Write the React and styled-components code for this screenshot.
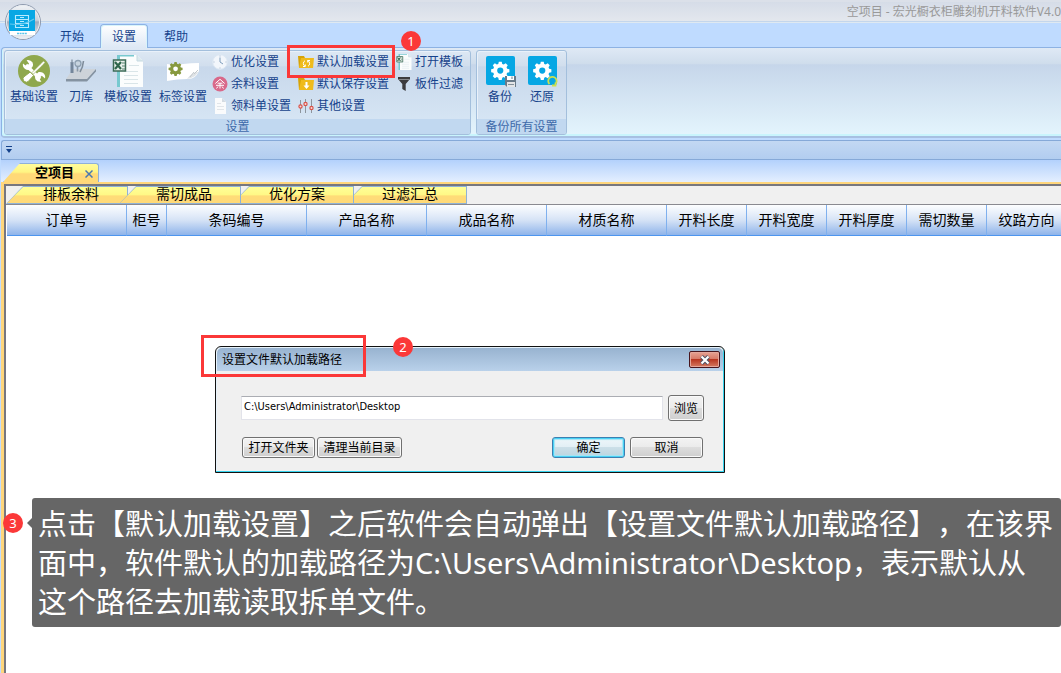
"use strict";

import React, { useState } from "react";
import styled, { createGlobalStyle, css } from "styled-components";

/*************************************************************************/

const GlobalStyle = createGlobalStyle`
  * { box-sizing: border-box; }
  body {
    margin: 0;
    overflow: hidden;
    background: #fff;
    font-family: "Noto Sans", "Noto Sans CJK SC", sans-serif;
    font-size: 12px;
    line-height: 16px;
  }
  button, input {
    font: inherit;
    color: inherit;
  }
`;

let Page = styled.div`
  position: relative;
  display: flex;
  flex-direction: column;
  min-height: 100vh;
  overflow: hidden;
  background: #bfdbff;
`;

let TitleBar = styled.header`
  display: flex;
  justify-content: flex-end;
  height: 23px;
  padding: 4px 0 0 60px;
  border-bottom: 1px solid #dfe9f1;
  box-shadow: inset 0 -1px #c3d6ec, inset 0 2px #dbe0e9;
  background: linear-gradient(#d4dbe7, #e4e8ee);
  color: #999;
  white-space: nowrap;
`;

let AppButton = styled.button`
  position: absolute;
  left: 4px;
  top: 3px;
  z-index: 2;
  width: 38px;
  height: 38px;
  padding: 0;
  border: 0;
  background: none;
`;

let RibbonTabs = styled.nav`
  display: flex;
  gap: 4px;
  height: 25px;
  margin-bottom: -1px;
  padding: 1px 0 0 48px;
`;

let RibbonTab = styled.button`
  position: relative;
  width: 48px;
  padding: 0;
  border: 1px solid transparent;
  border-bottom: 0;
  border-radius: 4px 4px 0 0;
  background: none;
  color: #15428b;
  ${p => p.$active && css`
    border-color: #8db2e3;
    background: linear-gradient(#fff, #dde8f5);
    box-shadow: inset 1px 1px #d8f4fb, inset -1px 0 #d8f4fb;
  `}
`;

let Ribbon = styled.section`
  display: flex;
  gap: 5px;
  height: 91px;
  margin-left: 1px;
  padding: 2px 0 1px 2px;
  border: 1px solid #8db2e3;
  border-right: 0;
  border-bottom: 2px solid #a7c0e2;
  border-radius: 4px 0 0 4px;
  box-shadow: inset 1px -2px #c9f5fd;
  background: linear-gradient(#dfe9f5 0, #cfddec 18%, #c6d6ea 19%, #e4f5fd 100%);
`;

let Group = styled.div`
  display: flex;
  flex-direction: column;
  justify-content: space-between;
  border: 1px solid #a3bfdc;
  border-radius: 3px;
  overflow: hidden;
  box-shadow: inset 1px 1px #e9f1fa;
  background: linear-gradient(#dde8f4 0, #d1deed 18%, #c8d8eb 19%, #d9e8f6 100%);
`;

let GroupBody = styled.div`
  display: flex;
  align-items: flex-start;
  gap: ${p => p.$gap};
  padding: ${p => p.$padding};
`;

let GroupLabel = styled.div`
  height: 15px;
  background: #c1d8f0;
  color: #3e6aaa;
  text-align: center;
  line-height: 15px;
`;

let BigButton = styled.button`
  display: flex;
  flex-direction: column;
  align-items: center;
  gap: 2px;
  padding: 4px 2px 0;
  border: 0;
  background: none;
  color: #15428b;
  white-space: nowrap;
`;

let SmallColumns = styled.div`
  display: flex;
  gap: 7px;
`;

let SmallColumn = styled.div`
  display: flex;
  flex-direction: column;
`;

let SmallButton = styled.button`
  display: flex;
  align-items: center;
  gap: 3px;
  height: 22px;
  padding: 0;
  border: 0;
  background: none;
  color: #15428b;
  white-space: nowrap;
`;

let QuickBar = styled.div`
  display: flex;
  align-items: center;
  height: 20px;
  margin: 2px 0 0 1px;
  padding-left: 4px;
  border: 1px solid #86a9d8;
  border-right: 0;
  border-radius: 3px 0 0 0;
  background: linear-gradient(#c3d8f3, #b2cdf0);
`;

let IconButton = styled.button`
  display: flex;
  padding: 0;
  border: 0;
  background: none;
`;

let DocumentTabs = styled.div`
  display: flex;
  align-items: flex-end;
  height: 22px;
  margin-left: 1px;
  padding-left: 2px;
  background: linear-gradient(#b3d1fc, #e4efff);
`;

let slant = size => css`
  clip-path: polygon(${size} 0, 100% 0, 100% 100%, 0 100%);
`;

let DocumentTab = styled.div`
  display: flex;
  align-items: center;
  gap: 11px;
  height: 19px;
  padding: 0 5px 2px 31px;
  border: 1px solid #8fb0d8;
  border-bottom: 0;
  border-radius: 0 3px 0 0;
  background: linear-gradient(#fffc9c 0, #fff582 45%, #ffd978 55%, #ffd978 100%);
  font-size: 13px;
  font-weight: bold;
  ${slant("17px")}
`;

let Workspace = styled.main`
  position: relative;
  display: flex;
  flex: 1;
  flex-direction: column;
  min-height: 400px;
  margin-left: 1px;
  border-top: 2px solid #ffd67c;
  border-left: 3px solid #ffd67c;
`;

let Frame = styled.div`
  flex: 1;
  border-top: 2px solid #77777f;
  border-left: 2px solid #77777f;
  overflow: hidden;
  background: #fff;
`;

let SheetTabs = styled.div`
  display: flex;
  height: 19px;
  border-bottom: 1px solid #8a8a90;
  background: #f0f0f0;
`;

let SheetTab = styled.button`
  position: relative;
  z-index: ${p => p.$level};
  width: 122px;
  margin-right: -9px;
  padding: 0 0 0 9px;
  border: 0;
  background: #8fb2d6;
  font-size: 14px;
  ${slant("17px")}
`;

let SheetFace = styled.span`
  display: block;
  height: 16px;
  margin: 0 1px 0 -8px;
  padding-left: 8px;
  background: linear-gradient(#ffff98 0, #fff886 48%, #ffdc78 56%, #ffd978 100%);
  line-height: 14px;
  ${slant("16px")}
`;

let Table = styled.table`
  width: 1060px;
  margin-left: 1px;
  border-collapse: separate;
  border-spacing: 0;
  table-layout: fixed;
`;

let Th = styled.th`
  width: ${p => p.$width};
  height: 31px;
  padding: 0;
  border-right: 1px solid #7fb0ee;
  border-bottom: 1px solid #4d95ee;
  background: linear-gradient(#fdfeff, #d6e3f6 50%, #8fb4ea);
  font-size: 14px;
  font-weight: normal;
  white-space: nowrap;
`;

/*************************************************************************/

let Dialog = styled.section`
  position: absolute;
  left: 215px;
  top: 346px;
  z-index: 3;
  width: 510px;
  border: 1px solid #111;
  border-radius: 6px 6px 0 0;
  box-shadow: inset -1px -1px #35d3ee, inset 1px 1px #e6f2fb;
  background: #f0f0f0;
`;

let DialogTitle = styled.div`
  display: flex;
  align-items: center;
  justify-content: space-between;
  height: 23px;
  margin: 1px 1px 0;
  padding: 0 3px 0 5px;
  border-radius: 5px 5px 0 0;
  background: linear-gradient(#98b3d0, #b9d1ea);
`;

let CloseButton = styled.button`
  display: flex;
  align-items: center;
  justify-content: center;
  width: 31px;
  height: 17px;
  padding: 0;
  border: 1px solid #47151d;
  border-radius: 2px;
  box-shadow: inset 0 0 0 1px #e5a79c;
  background: linear-gradient(#e6a394 0, #d87b69 45%, #b83621 50%, #d57b62 100%);
`;

let DialogBody = styled.div`
  display: grid;
  gap: 16px;
  padding: 24px 20px 14px 25px;
`;

let Row = styled.div`
  display: flex;
  align-items: center;
  gap: ${p => p.$gap};
  padding: ${p => p.$padding || 0};
`;

let PathInput = styled.input`
  flex: 1;
  min-width: 0;
  height: 24px;
  padding: 0 2px 3px;
  border: 1px solid #e2e3ea;
  border-top-color: #abadb3;
  background: #fff;
  font-family: "DejaVu Sans Condensed", "Noto Sans", sans-serif;
  font-size: 11px;
`;

let DialogButton = styled.button`
  width: ${p => p.$width || "73px"};
  height: ${p => p.$height || "21px"};
  padding: 0;
  border: 1px solid #707070;
  border-radius: 3px;
  box-shadow: inset 0 0 0 1px #fafafa;
  background: linear-gradient(#f3f3f3 0, #ebebeb 49%, #dddddd 50%, #cfcfcf 100%);
  line-height: 17px;
  white-space: nowrap;
  ${p => p.$primary && css`
    border-color: #3c7fb1;
    box-shadow: inset 0 0 0 1px #48d2f5, inset 0 0 1px 2px #a5e4f6;
    background: linear-gradient(#eef6fa 0, #e2eff5 49%, #cbdfe8 50%, #bcd4df 100%);
  `}
`;

let Spacer = styled.div`
  flex: 1;
`;

/*************************************************************************/

let Highlight = styled.div`
  position: absolute;
  left: ${p => p.$left};
  top: ${p => p.$top};
  z-index: 4;
  width: ${p => p.$width};
  height: ${p => p.$height};
  border: 3px solid #fb3838;
  pointer-events: none;
`;

let Badge = styled.span`
  position: absolute;
  left: ${p => p.$left};
  top: ${p => p.$top};
  z-index: 5;
  width: 20px;
  height: 20px;
  border-radius: 50%;
  background: #fb3838;
  color: #fff;
  font-size: 13px;
  line-height: 20px;
  text-align: center;
`;

let Callout = styled.p`
  position: absolute;
  left: 32px;
  right: 0;
  top: 498px;
  z-index: 4;
  margin: 0;
  padding: 6px 8px 6px 6px;
  border-radius: 3px;
  background: #666;
  color: #fff;
  font-size: 29px;
  line-height: 39px;
  text-spacing-trim: space-all;

  &::before {
    content: "";
    position: absolute;
    left: -5px;
    top: 20px;
    border: 5px solid transparent;
    border-left: 0;
    border-right-color: #666;
  }
`;

/*************************************************************************/

let gearPath = "M14.3 6h3.4l.6 2.6 1.7.7 2.3-1.4 2.4 2.4-1.4 2.3.7 1.7 2.6.6v3.4l-2.6.6-.7 1.7 1.4 2.3-2.4 2.4-2.3-1.4-1.7.7-.6 2.6h-3.4l-.6-2.6-1.7-.7-2.3 1.4-2.4-2.4 1.4-2.3-.7-1.7-2.6-.6v-3.4l2.6-.6.7-1.7-1.4-2.3 2.4-2.4 2.3 1.4 1.7-.7zM16 12.8a3.6 3.6 0 1 0 0 7.200 3.600 3.600 0 0 0 0-7.200z";

let Logo = () => (
  <svg width="38" height="38" viewBox="0 0 38 38">
    <defs>
      <linearGradient id="orb" x2="0" y2="1">
        <stop offset="0" stopColor="#f4f6f9"/>
        <stop offset=".45" stopColor="#c9d0da"/>
        <stop offset=".5" stopColor="#9fabbd"/>
        <stop offset="1" stopColor="#f2f5f8"/>
      </linearGradient>
    </defs>
    <circle cx="19" cy="19" r="17.500" fill="url(#orb)" stroke="#8e9aae"/>
    <circle cx="19" cy="19" r="16.500" fill="none" stroke="#e8ecf1"/>
    <path d="M6 7h25v25H6z" fill="#fff"/>
    <path d="M5 7h26v21H5z" fill="#08a7e4"/>
    <g fill="none" stroke="#b8ebff" strokeWidth="1.1">
      <path d="M11.5 12.5h13v12h-13zM11.5 16.5h13M11.5 20.5h13M16 14.5h4M16 18.5h4M16 22.5h4"/>
      <path d="M6 21q13 2 24-5" stroke="#64c9ef"/>
    </g>
    <path d="M13 30.5h10" stroke="#59c3ea" strokeWidth="1.5" strokeDasharray="2 .6"/>
  </svg>
);

let ToolsIcon = () => (
  <svg width="32" height="32" viewBox="0 0 32 32">
    <circle cx="16" cy="16" r="16" fill="#8fa84d"/>
    <path d="M8 10l14 14" stroke="#fff" strokeWidth="3.4"/>
    <path d="M5 8.5l3.4 2.8 2.7-2.5L8.6 5.2q4-.8 6 2.4 1 2.2-.2 4.4l-3 2.8q-4.600.6-6.200-3Q4.500 10 5 8.500z" fill="#fff"/>
    <path d="M27 23.500l-3.200-2.800-2.700 2.500 2.300 3.500q-4 .8-6-2.400-1-2.200.2-4.400l3-2.800q4.600-.6 6.200 3 .7 1.800.2 3.400z" fill="#fff"/>
    <path d="M25.500 6l1.500 1.500-3 3.300L15.500 19 14 17.500l8.200-8.200z" fill="#fff" stroke="#8fa84d" strokeWidth=".6"/>
    <path d="M12.200 17l3.500 3.500-5.500 6q-1.700 1.500-3.600 0l-1-1q-1.400-1.800 0-3.400z" fill="#fff" stroke="#8fa84d"/>
  </svg>
);

let KnifeIcon = () => (
  <svg width="32" height="32" viewBox="0 0 32 32">
    <path d="M8 14h23L22 24H1z" fill="#cdd3d9"/>
    <path d="M1 24h21l9-10v2.500L22 26.500H1z" fill="#8593a1"/>
    <path d="M5.500 7h3v11h-3z" fill="#74869a"/>
    <path d="M7 4.500v3" stroke="#93a2b1" strokeWidth="1.600"/>
    <circle cx="13" cy="8.500" r="3" fill="#c7d4df" stroke="#8ea0b1" strokeWidth="1.300"/>
    <path d="M12.500 11.500v5" stroke="#8a99a8" strokeWidth="1.600"/>
    <path d="M18.500 6q-.5 6-3.500 11" stroke="#7f8d9b" strokeWidth="1.600" fill="none"/>
  </svg>
);

let ExcelIcon = ({size}) => (
  <svg width={size} height={size} viewBox="0 0 32 32">
    <path d="M7 0h18l6 6v26H7z" fill="#fbfdfd"/>
    <path d="M5 0h17v1.500H8V32H5z" fill="#78c9cf"/>
    <path d="M25 0v6h6" fill="#dce9ee" stroke="#c5d9e1"/>
    <path d="M12 16.500h14M12 20.500h14M12 24.500h14M12 28.500h14M17 10.500h10" stroke="#d9e5e8"/>
    <path d="M1.500 5h12v11h-12z" fill="#e9f1ec" stroke="#3c6b57" strokeWidth="1.500"/>
    <path d="M3 7l6 7M9 7l-6 7" stroke="#2f664b" strokeWidth="2.200"/>
    <path d="M10 8h3M10 11h3M10 14h3" stroke="#5b8370"/>
  </svg>
);

let LabelIcon = () => (
  <svg width="32" height="32" viewBox="0 0 32 32">
    <path d="M0 9q8 1 16 0t16-1v8q-4 9-12 8-10 0-20 2z" fill="#fff"/>
    <path d="M20 24q5-7 11-7l1-3q-1 8-12 10z" fill="#dfe3e6"/>
    <path d="M23 22l4-5M27 19l4-4" stroke="#c2c7cb"/>
    <g transform="translate(-2 3) scale(.66)">
      <path d={gearPath} fill="#87993e" fillRule="evenodd"/>
    </g>
  </svg>
);

let ClockIcon = () => (
  <svg width="16" height="16" viewBox="0 0 16 16">
    <circle cx="8" cy="8" r="7.300" fill="#f2f6fb" stroke="#dce7f2"/>
    <path d="M8 3.500V8l3 2" fill="none" stroke="#7f9dbb"/>
    <path d="M8 1.500v1M8 13.500v1M1.500 8h1M13.500 8h1" stroke="#a4b9ce"/>
  </svg>
);

let RemainIcon = () => (
  <svg width="16" height="16" viewBox="0 0 16 16">
    <circle cx="8" cy="8" r="7.500" fill="#d9698a"/>
    <path d="M3.300 7.500L8 3.300l4.700 4.200M5.500 7.200h5M4 9.300h8M8 7.200v5.300M6 10.500l-1.500 2M10 10.500l1.500 2" fill="none" stroke="#fff"/>
  </svg>
);

let PageIcon = () => (
  <svg width="16" height="16" viewBox="0 0 16 16">
    <path d="M3 0h7l4 4v12H3z" fill="#fafbfc"/>
    <path d="M10 0v4h4z" fill="#d4dbe2"/>
    <path d="M5 5.500h4M5 8.500h7M5 11.500h7" stroke="#e1e5e9"/>
  </svg>
);

let FolderIcon = ({save}) => (
  <svg width="16" height="16" viewBox="0 0 16 16">
    <path d="M0 2h6l1 2h8v10H1z" fill="#d7a307"/>
    <path d="M3 4h13l-1 10H1z" fill="#efbb1c"/>
    {save
      ? <path d="M7.500 6h2v3.500h2L8.500 13l-3-3.500h2z" fill="#fff"/>
      : <path d="M7 12.300A3.200 3.200 0 0 1 7 6.700M9.500 6.500a3.200 3.200 0 0 1 .5 5.800M5 12.500h2.300V10.500M12 6.500H9.700v2" fill="none" stroke="#fff"/>}
  </svg>
);

let SlidersIcon = () => (
  <svg width="16" height="16" viewBox="0 0 16 16">
    <path d="M2.500 2v13M7.500 1v14M13.500 1v14" stroke="#8d959d"/>
    <g fill="#f9dcd9" stroke="#d9534a" strokeWidth="1.200">
      <circle cx="2.500" cy="8.500" r="1.600"/>
      <circle cx="7.500" cy="6" r="1.600"/>
      <circle cx="13.500" cy="10" r="1.600"/>
    </g>
  </svg>
);

let FilterIcon = () => (
  <svg width="16" height="16" viewBox="0 0 16 16">
    <path d="M2 1h12v2l-4.300 5v7l-3.400-2V8L2 3z" fill="#3c3c3e"/>
    <path d="M3 3.500h10" stroke="#84878b"/>
  </svg>
);

let BackupIcon = ({restore}) => (
  <svg width="32" height="32" viewBox="0 0 32 32">
    <rect x="2" y="1" width="29" height="29" rx="2" fill="#06a7e4"/>
    <g transform="translate(2.500 1.500) scale(.86)">
      <path d={gearPath} fill="#fff" fillRule="evenodd"/>
    </g>
    {restore
      ? <path d="M23.500 29a4.200 4.200 0 1 1 5.500.3M26 30.500h3.500v-3" fill="none" stroke="#cce04e" strokeWidth="1.800"/>
      : <g>
          <path d="M21 21h11v11H23l-2-2z" fill="#687a89"/>
          <path d="M23 21h7v4h-7z" fill="#fff"/>
          <path d="M23 27h8v5h-8z" fill="#e3e5e7"/>
          <path d="M28 21.500v2.500M24 29.500h6" stroke="#83909a" strokeWidth="1.200"/>
        </g>}
  </svg>
);

let CloseCross = () => (
  <svg width="12" height="10" viewBox="0 0 12 10">
    <path d="M2.500 1.500l7 7M9.500 1.500l-7 7" stroke="#4b5266" strokeWidth="4"/>
    <path d="M2.500 1.500l7 7M9.500 1.500l-7 7" stroke="#fff" strokeWidth="2.200"/>
  </svg>
);

/*************************************************************************/

const tabs = ["开始", "设置", "帮助"];

const bigButtons = [
  { label: "基础设置", icon: <ToolsIcon/> },
  { label: "刀库", icon: <KnifeIcon/> },
  { label: "模板设置", icon: <ExcelIcon size={32}/> },
  { label: "标签设置", icon: <LabelIcon/> }
];

const smallButtons = [
  [
    { label: "优化设置", icon: <ClockIcon/> },
    { label: "余料设置", icon: <RemainIcon/> },
    { label: "领料单设置", icon: <PageIcon/> }
  ],
  [
    { label: "默认加载设置", icon: <FolderIcon/> },
    { label: "默认保存设置", icon: <FolderIcon save/> },
    { label: "其他设置", icon: <SlidersIcon/> }
  ],
  [
    { label: "打开模板", icon: <ExcelIcon size={16}/> },
    { label: "板件过滤", icon: <FilterIcon/> }
  ]
];

// the second sheet tab lies over its neighbours
const sheets = [
  { label: "排板余料", level: 0 },
  { label: "需切成品", level: 3 },
  { label: "优化方案", level: 2 },
  { label: "过滤汇总", level: 1 }
];

const columns = [
  ["订单号", 120], ["柜号", 40], ["条码编号", 140], ["产品名称", 120],
  ["成品名称", 120], ["材质名称", 120], ["开料长度", 80], ["开料宽度", 80],
  ["开料厚度", 80], ["需切数量", 80], ["纹路方向", 80]
];

let Big = ({label, icon}) => <BigButton>{icon}{label}</BigButton>;

let PathDialog = () => {
  const [path, setPath] = useState("C:\\Users\\Administrator\\Desktop");
  return (
    <Dialog role="dialog" aria-labelledby="path-title">
      <DialogTitle>
        <span id="path-title">设置文件默认加载路径</span>
        <CloseButton aria-label="关闭"><CloseCross/></CloseButton>
      </DialogTitle>
      <DialogBody>
        <Row $gap="5px">
          <PathInput aria-labelledby="path-title" value={path} onChange={e => setPath(e.target.value)}/>
          <DialogButton $width="36px" $height="26px">浏览</DialogButton>
        </Row>
        <Row $gap="2px" $padding="0 1px">
          <DialogButton>打开文件夹</DialogButton>
          <DialogButton $width="85px">清理当前目录</DialogButton>
          <Spacer/>
          <Row $gap="5px">
            <DialogButton $primary>确定</DialogButton>
            <DialogButton>取消</DialogButton>
          </Row>
        </Row>
      </DialogBody>
    </Dialog>
  );
};

let App = () => {
  const [active, setActive] = useState("设置");
  return (
    <Page>
      <GlobalStyle/>
      <AppButton aria-label="菜单"><Logo/></AppButton>
      <TitleBar>空项目 - 宏光橱衣柜雕刻机开料软件V4.0</TitleBar>
      <RibbonTabs>
        {tabs.map(tab => (
          <RibbonTab key={tab} $active={tab === active} onClick={() => setActive(tab)}>{tab}</RibbonTab>
        ))}
      </RibbonTabs>
      <Ribbon>
        <Group>
          <GroupBody $gap="3px" $padding="0 7px 0 3px">
            {bigButtons.map(item => <Big key={item.label} {...item}/>)}
            <SmallColumns>
              {smallButtons.map((column, index) => (
                <SmallColumn key={index}>
                  {column.map(item => (
                    <SmallButton key={item.label}>{item.icon}{item.label}</SmallButton>
                  ))}
                </SmallColumn>
              ))}
            </SmallColumns>
          </GroupBody>
          <GroupLabel>设置</GroupLabel>
        </Group>
        <Group>
          <GroupBody $gap="6px" $padding="0 6px 0 5px">
            <Big label="备份" icon={<BackupIcon/>}/>
            <Big label="还原" icon={<BackupIcon restore/>}/>
          </GroupBody>
          <GroupLabel>备份所有设置</GroupLabel>
        </Group>
      </Ribbon>
      <QuickBar>
        <IconButton aria-label="自定义工具栏">
          <svg width="6" height="8" viewBox="0 0 6 8"><path d="M0 0h6v1H0zM0 3h6L3 7z" fill="#15428b"/></svg>
        </IconButton>
      </QuickBar>
      <DocumentTabs>
        <DocumentTab>
          空项目
          <IconButton aria-label="关闭项目">
            <svg width="8" height="12" viewBox="0 0 8 12"><path d="M.5 4.500l7 7M7.500 4.500l-7 7" stroke="#4a78b0" strokeWidth="1.500"/></svg>
          </IconButton>
        </DocumentTab>
      </DocumentTabs>
      <Workspace>
        <Frame>
          <SheetTabs>
            {sheets.map(({label, level}) => (
              <SheetTab key={label} $level={level}><SheetFace>{label}</SheetFace></SheetTab>
            ))}
          </SheetTabs>
          <Table>
            <thead>
              <tr>
                {columns.map(([label, width]) => <Th key={label} $width={`${width}px`}>{label}</Th>)}
              </tr>
            </thead>
          </Table>
        </Frame>
      </Workspace>
      <PathDialog/>
      <Highlight $left="287px" $top="45px" $width="108px" $height="33px"/>
      <Badge $left="401px" $top="31px">1</Badge>
      <Highlight $left="201px" $top="335px" $width="165px" $height="42px"/>
      <Badge $left="393px" $top="337px">2</Badge>
      <Badge $left="3px" $top="513px">3</Badge>
      <Callout>
        点击【默认加载设置】之后软件会自动弹出【设置文件默认加载路径】，在该界面中，软件默认的加载路径为C:\Users\Administrator\Desktop，表示默认从这个路径去加载读取拆单文件。
      </Callout>
    </Page>
  );
};

export default App;
